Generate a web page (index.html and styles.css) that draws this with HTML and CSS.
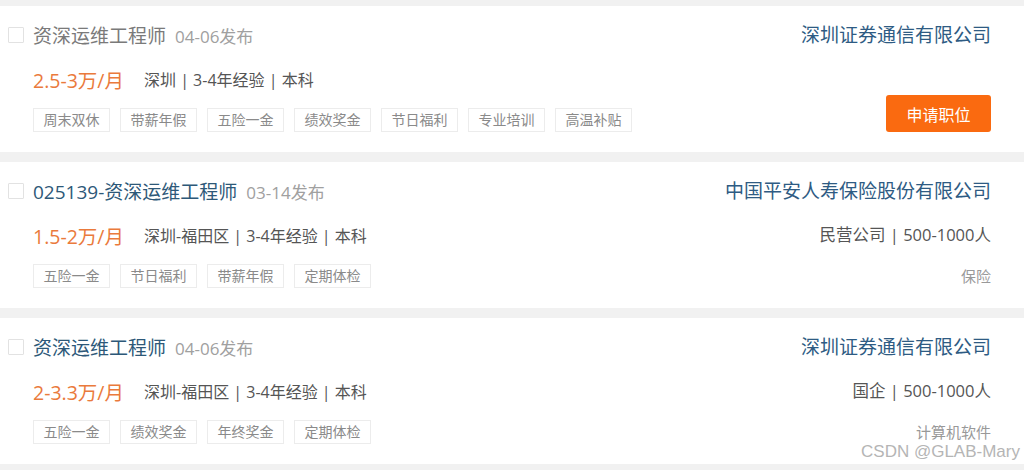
FILE: index.html
```html
<!DOCTYPE html>
<html lang="zh-CN">
<head>
<meta charset="utf-8">
<title>职位列表</title>
<link rel="stylesheet" href="styles.css">
</head>
<body>
<div class="list">
  <div class="card">
    <div class="main">
      <div class="title-row">
        <span class="check"></span>
        <span class="job visited">资深运维工程师</span>
        <span class="date">04-06发布</span>
      </div>
      <div class="info-row">
        <span class="salary">2.5-3万/月</span>
        <span class="req">深圳 | 3-4年经验 | 本科</span>
      </div>
      <div class="tags">
        <span class="tag">周末双休</span>
        <span class="tag">带薪年假</span>
        <span class="tag">五险一金</span>
        <span class="tag">绩效奖金</span>
        <span class="tag">节日福利</span>
        <span class="tag">专业培训</span>
        <span class="tag">高温补贴</span>
      </div>
    </div>
    <div class="side">
      <div class="company">深圳证券通信有限公司</div>
      <button class="apply">申请职位</button>
    </div>
  </div>

  <div class="card">
    <div class="main">
      <div class="title-row">
        <span class="check"></span>
        <span class="job">025139-资深运维工程师</span>
        <span class="date">03-14发布</span>
      </div>
      <div class="info-row">
        <span class="salary">1.5-2万/月</span>
        <span class="req">深圳-福田区 | 3-4年经验 | 本科</span>
      </div>
      <div class="tags">
        <span class="tag">五险一金</span>
        <span class="tag">节日福利</span>
        <span class="tag">带薪年假</span>
        <span class="tag">定期体检</span>
      </div>
    </div>
    <div class="side">
      <div class="company">中国平安人寿保险股份有限公司</div>
      <div class="meta">民营公司 | 500-1000人</div>
      <div class="industry">保险</div>
    </div>
  </div>

  <div class="card">
    <div class="main">
      <div class="title-row">
        <span class="check"></span>
        <span class="job">资深运维工程师</span>
        <span class="date">04-06发布</span>
      </div>
      <div class="info-row">
        <span class="salary">2-3.3万/月</span>
        <span class="req">深圳-福田区 | 3-4年经验 | 本科</span>
      </div>
      <div class="tags">
        <span class="tag">五险一金</span>
        <span class="tag">绩效奖金</span>
        <span class="tag">年终奖金</span>
        <span class="tag">定期体检</span>
      </div>
    </div>
    <div class="side">
      <div class="company">深圳证券通信有限公司</div>
      <div class="meta">国企 | 500-1000人</div>
      <div class="industry">计算机软件</div>
    </div>
  </div>
</div>
<div class="watermark">CSDN @GLAB-Mary</div>
</body>
</html>
```
FILE: styles.css
```css
html, body {
  margin: 0;
  padding: 0;
}
body {
  background: #f1f1f1;
  font-family: "Open Sans", "Noto Sans CJK SC", sans-serif;
  color: #555;
  position: relative;
  height: 470px;
  overflow: hidden;
}
.list {
  display: flex;
  flex-direction: column;
  gap: 10px;
  padding-top: 6px;
}
.card {
  background: #fff;
  height: 146px;
  box-sizing: border-box;
  padding: 16px 33px 20px 8px;
  display: flex;
  justify-content: space-between;
}
.main {
  display: flex;
  flex-direction: column;
}
.title-row {
  display: flex;
  align-items: center;
  height: 26px;
  white-space: nowrap;
}
.check {
  width: 16px;
  height: 16px;
  border: 1px solid #e2e2e2;
  border-radius: 1px;
  margin-right: 9px;
  box-sizing: border-box;
  flex: none;
}
.job {
  font-size: 19px;
  color: #2d5878;
  margin-right: 9px;
}
.job.visited {
  color: #7a7a7a;
}
.date {
  font-size: 17px;
  color: #a0a0a0;
}
.info-row {
  display: flex;
  align-items: center;
  height: 26px;
  margin-top: 18px;
  padding-left: 25px;
  white-space: nowrap;
}
.salary {
  font-size: 19.5px;
  color: #ea7a3c;
  margin-right: 20px;
}
.req {
  font-size: 16px;
  color: #555;
}
.tags {
  display: flex;
  gap: 10px;
  margin-top: 16px;
  padding-left: 25px;
}
.tag {
  height: 24px;
  line-height: 22px;
  box-sizing: border-box;
  border: 1px solid #ececec;
  padding: 0;
  font-size: 14px;
  color: #8a8a8a;
  width: 77px;
  text-align: center;
  white-space: nowrap;
}
.side {
  display: flex;
  flex-direction: column;
  align-items: flex-end;
  white-space: nowrap;
}
.company {
  height: 26px;
  line-height: 26px;
  font-size: 19px;
  color: #2e5b83;
}
.meta {
  height: 26px;
  line-height: 26px;
  margin-top: 18px;
  font-size: 16.5px;
  color: #555;
}
.industry {
  height: 24px;
  line-height: 24px;
  margin-top: 16px;
  font-size: 15px;
  color: #999;
}
.apply {
  margin-top: auto;
  width: 105px;
  height: 37px;
  border: none;
  border-radius: 3px;
  background: #fa6a10;
  color: #fff;
  font-family: "Noto Sans CJK SC", sans-serif;
  font-size: 16px;
  padding: 0;
}
.watermark {
  position: absolute;
  right: 4px;
  top: 442px;
  font-family: "Liberation Sans", Arial, sans-serif;
  font-size: 17px;
  color: #b5b5b5;
}
```
